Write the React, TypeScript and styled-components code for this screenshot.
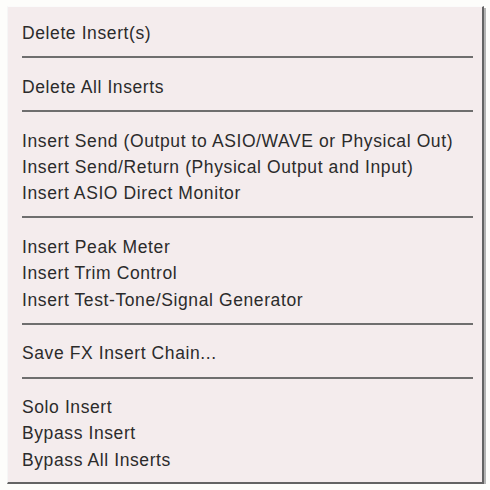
import React from "react";
import styled, { createGlobalStyle } from "styled-components";

const GlobalStyle = createGlobalStyle`
  html, body {
    margin: 0;
    padding: 0;
    background: #fdfdfb;
  }
`;

const Menu = styled.div`
  box-sizing: border-box;
  margin: 6px 0 0 7px;
  width: 477px;
  height: 478px;
  background: #f4eced;
  border-top: 1px solid #fbfbfb;
  border-left: 1px solid #f6f6f6;
  border-right: 2px solid #646464;
  border-bottom: 2px solid #646464;
  box-shadow: 2px 2px 0 #b4b4b4;
  padding: 13px 9px 0 14px;
  font-family: "Liberation Sans", Arial, sans-serif;
  font-size: 17.5px;
  letter-spacing: 0.6px;
  color: #2b2b2b;
`;

const Group = styled.div`
  display: flex;
  flex-direction: column;
`;

const Item = styled.div`
  line-height: 26.3px;
  height: 26.3px;
  white-space: nowrap;
  cursor: default;
`;

const Separator = styled.div`
  height: 2px;
  margin: 10px 0 15.5px 0;
  background: #6e6e6e;
`;

const groups: string[][] = [
  ["Delete Insert(s)"],
  ["Delete All Inserts"],
  [
    "Insert Send (Output to ASIO/WAVE or Physical Out)",
    "Insert Send/Return (Physical Output and Input)",
    "Insert ASIO Direct Monitor",
  ],
  [
    "Insert Peak Meter",
    "Insert Trim Control",
    "Insert Test-Tone/Signal Generator",
  ],
  ["Save FX Insert Chain..."],
  ["Solo Insert", "Bypass Insert", "Bypass All Inserts"],
];

const App = () => {
  return (
    <>
      <GlobalStyle />
      <Menu>
        {groups.map((items, i) => (
          <React.Fragment key={i}>
            {i > 0 && <Separator />}
            <Group>
              {items.map((label) => (
                <Item key={label}>{label}</Item>
              ))}
            </Group>
          </React.Fragment>
        ))}
      </Menu>
    </>
  );
};

export default App;
